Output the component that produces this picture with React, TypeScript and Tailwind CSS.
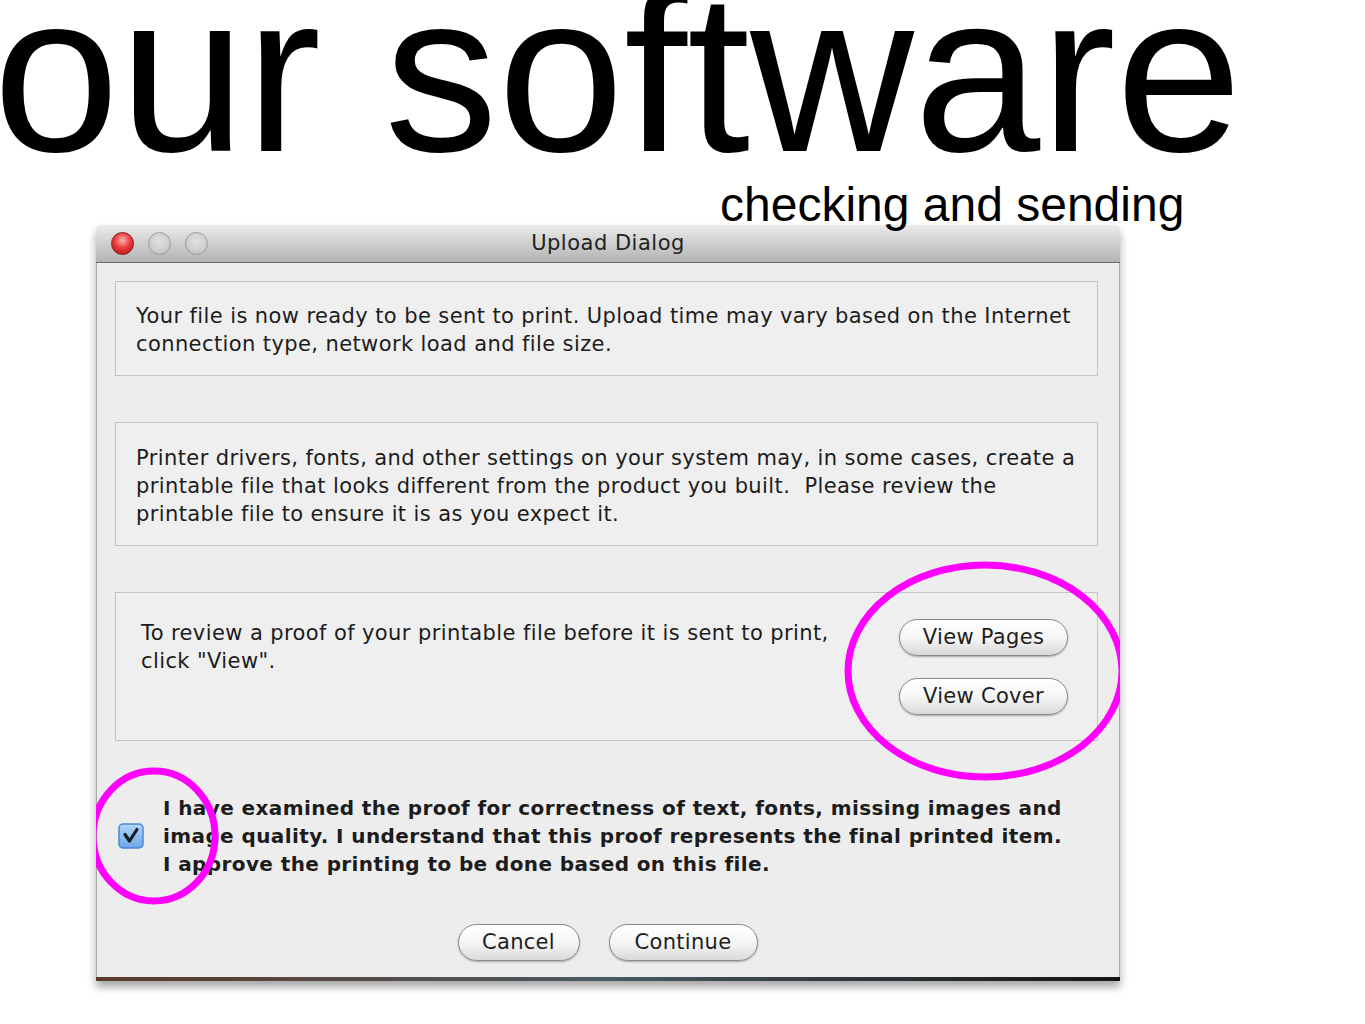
import React from "react";

const ui = "font-['DejaVu_Sans','Verdana',sans-serif]";

function MacButton({ children, className = "" }: { children: React.ReactNode; className?: string }) {
  return (
    <button
      className={`h-[37px] rounded-full border border-[#8a8a8a] bg-linear-to-b from-white via-[#f6f6f6] to-[#d9d9d9] shadow-[0_1px_2px_rgba(0,0,0,0.3)] text-[21px] tracking-[0.3px] leading-none text-[#1e1e1e] ${ui} ${className}`}
    >
      {children}
    </button>
  );
}

function Light({ red }: { red?: boolean }) {
  return (
    <div
      className={`w-[23px] h-[23px] rounded-full border ${
        red
          ? "border-[#8c1a1a] bg-[radial-gradient(circle_at_50%_35%,#ffb3b3_0%,#ec3b3b_45%,#a80d10_100%)]"
          : "border-[#9c9c9c] bg-[radial-gradient(circle_at_50%_40%,#e2e2e2_0%,#cfcfcf_55%,#b4b4b4_100%)]"
      }`}
    />
  );
}

export default function App() {
  return (
    <div className="w-[1365px] h-[1024px] overflow-hidden bg-white relative">
      <h1 className="font-['Liberation_Sans',Arial,sans-serif] text-[227px] leading-none text-black -mt-[41px] -ml-[7px] whitespace-nowrap">
        our software
      </h1>
      <div className="relative z-10 ml-[720px] -mt-[5px] font-['Liberation_Sans',Arial,sans-serif] text-[48px] leading-none text-black whitespace-nowrap">
        checking and sending
      </div>

      <div className="relative -mt-[4px] ml-[96px] w-[1024px] overflow-hidden rounded-t-[5px] shadow-[0_6px_8px_rgba(0,0,0,0.35)]">
        {/* title bar */}
        <div className="h-[38px] flex items-center bg-linear-to-b from-[#ebebeb] to-[#b3b3b3] border-b border-[#666] relative">
          <div className="flex gap-[14px] pl-[15px]">
            <Light red />
            <Light />
            <Light />
          </div>
          <div className={`absolute inset-0 flex items-center justify-center text-[21px] tracking-[0.5px] text-[#222] ${ui}`}>Upload Dialog</div>
        </div>

        {/* body */}
        <div className={`h-[714px] bg-[#ededed] border-x border-[#a9a9a9] pl-[18px] pr-[21px] pt-[18px] pb-[16px] flex flex-col text-[21px] tracking-[0.4px] leading-[28px] text-[#1c1c1c] ${ui}`}>
          <div className="h-[95px] border border-[#c3c3c3] bg-[#efefef] pt-[20px] pl-[20px] whitespace-nowrap">
            Your file is now ready to be sent to print. Upload time may vary based on the Internet
            <br />
            connection type, network load and file size.
          </div>

          <div className="mt-[46px] h-[124px] border border-[#c3c3c3] bg-[#efefef] pt-[21px] pl-[20px] whitespace-nowrap">
            Printer drivers, fonts, and other settings on your system may, in some cases, create a
            <br />
            printable file that looks different from the product you built.&nbsp; Please review the
            <br />
            printable file to ensure it is as you expect it.
          </div>

          <div className="mt-[46px] h-[149px] border border-[#c3c3c3] bg-[#efefef] pt-[26px] pl-[25px] pr-[29px] flex justify-between items-start">
            <div className="whitespace-nowrap">
              To review a proof of your printable file before it is sent to print,
              <br />
              click "View".
            </div>
            <div className="flex flex-col gap-[22px]">
              <MacButton className="w-[169px]">View Pages</MacButton>
              <MacButton className="w-[169px]">View Cover</MacButton>
            </div>
          </div>

          <div className="mt-[53px] flex items-center">
            <svg width="28" height="28" viewBox="0 0 28 28" className="ml-[2px] shrink-0">
              <defs>
                <linearGradient id="cb" x1="0" y1="0" x2="0" y2="1">
                  <stop offset="0" stopColor="#b3d6f8" />
                  <stop offset="1" stopColor="#6aa6e6" />
                </linearGradient>
              </defs>
              <rect x="2" y="2" width="24" height="24" rx="4" fill="url(#cb)" stroke="#4a86d2" strokeWidth="1.5" />
              <path d="M8 12.5 L12.5 19 L20 7.5" fill="none" stroke="#141a24" strokeWidth="3.2" strokeLinecap="round" strokeLinejoin="round" />
            </svg>
            <div className="ml-[18px] font-bold text-[20px] tracking-[0.4px] whitespace-nowrap">
              I have examined the proof for correctness of text, fonts, missing images and
              <br />
              image quality. I understand that this proof represents the final printed item.
              <br />
              I approve the printing to be done based on this file.
            </div>
          </div>

          <div className="mt-[46px] flex justify-center gap-[29px] pl-[2px]">
            <MacButton className="w-[122px]">Cancel</MacButton>
            <MacButton className="w-[149px]">Continue</MacButton>
          </div>
        </div>
        <div className="h-[4px] bg-linear-to-r from-[#5a3a2a] via-[#4a5a62] to-[#151515]" />

        {/* annotation circles */}
        <svg className="absolute inset-0 pointer-events-none" width="1024" height="760" viewBox="0 0 1024 760">
          <ellipse cx="889" cy="446" rx="137" ry="106" fill="none" stroke="#ff00ff" strokeWidth="7" />
          <ellipse cx="58" cy="611" rx="61" ry="65" fill="none" stroke="#ff00ff" strokeWidth="7" />
        </svg>
      </div>
    </div>
  );
}
